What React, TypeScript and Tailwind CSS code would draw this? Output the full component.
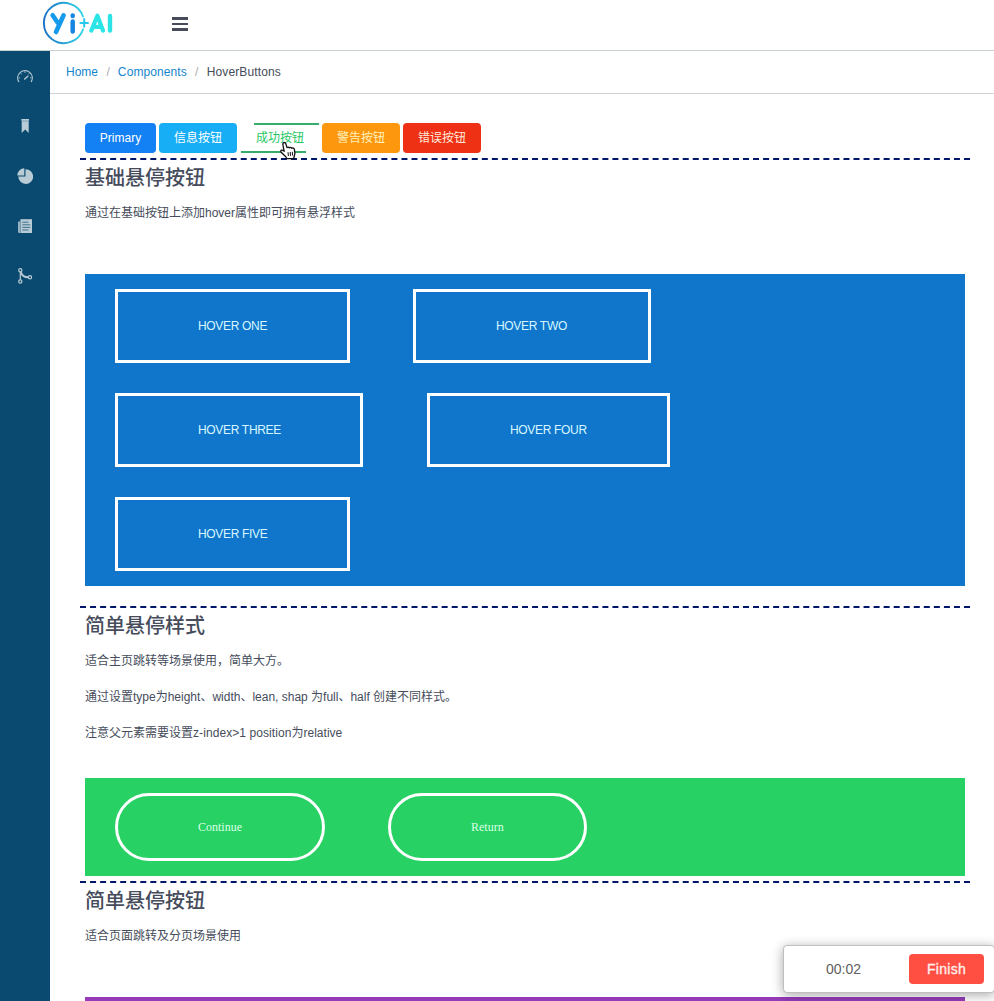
import type { ReactNode } from "react";

function Logo() {
  return (
    <svg width="74" height="48" viewBox="0 0 74 48" fill="none" strokeLinecap="round" strokeLinejoin="round">
      <defs>
        <linearGradient id="logo" gradientUnits="userSpaceOnUse" x1="2" y1="0" x2="44" y2="0">
          <stop offset="0" stopColor="#1b72c4" />
          <stop offset="1" stopColor="#2fdcea" />
        </linearGradient>
      </defs>
      <path d="M41 16.5A20.1 20.1 0 1 0 41 29.5" stroke="url(#logo)" strokeWidth="1.9" />
      <path d="M10.6 15.3L15.9 23M21.6 15.3L14 32" stroke="#169aec" strokeWidth="4.6" />
      <path d="M30.7 21.5V31.6M30.7 15.6V15.9" stroke="#1785e2" strokeWidth="4.5" />
      <path d="M38.4 22.9H46M42.2 19.1V26.8" stroke="#27c8ee" strokeWidth="2" />
      <path d="M49.3 30.6L55.4 15.8L61 30.6M53 26.8H58.5" stroke="#2ae4e6" strokeWidth="4.2" />
      <path d="M68 16V30.6" stroke="#2ae4e6" strokeWidth="4.4" />
    </svg>
  );
}

function Gauge() {
  return (
    <svg className="mt-[2px]" width="16" height="16" viewBox="0 0 16 16" fill="none" stroke="currentColor" strokeLinecap="round">
      <path d="M1.7 12.6A7.3 7.3 0 1 1 14.3 12.6" strokeWidth="1.1" />
      <path d="M8 2.2V3.6M3.6 4.2L4.4 5M1.6 8.8H2.6M14.4 8.8H13.4M12.4 4.2L11.6 5" strokeWidth=".8" />
      <path d="M7.7 10L10.8 7.2" strokeWidth="1.4" />
    </svg>
  );
}

function Bookmark() {
  return (
    <svg width="16" height="16" viewBox="0 0 16 16" fill="currentColor">
      <path d="M4.3 1H12V2.7H4.3zM4.7 3.3H11.7V15L8.2 11.6L4.7 15z" />
      <path d="M4.7 2.5H11.7V3.5H4.7z" opacity=".6" />
    </svg>
  );
}

function Pie() {
  return (
    <svg width="16" height="16" viewBox="0 0 16 16" fill="currentColor">
      <path d="M8.5 1.2A7.4 7.4 0 1 1 1.3 8.6H8.5z" />
      <path d="M7.3.3V7.4H.3A7.2 7.2 0 0 1 7.3.3z" />
    </svg>
  );
}

function Paper() {
  return (
    <svg width="16" height="16" viewBox="0 0 16 16" fill="currentColor">
      <path d="M3.4 1.2H15V15H3.4z" />
      <path d="M1.2 3.6H2.8V15H2.4A1.2 1.2 0 0 1 1.2 13.8z" />
      <path d="M5.3 4.2H11.5M5.3 6.8H13.3M5.3 9.4H13.3M5.3 12H11.5" stroke="#0a4a70" strokeWidth=".7" />
    </svg>
  );
}

function Git() {
  return (
    <svg width="16" height="16" viewBox="0 0 16 16" fill="none" stroke="currentColor" strokeWidth="1.2">
      <circle cx="3.3" cy="2.3" r="1.6" />
      <circle cx="3.3" cy="13.5" r="1.6" />
      <circle cx="13" cy="9.3" r="1.6" />
      <path d="M3.3 4V11.9" />
      <path d="M3.8 4C4.8 7.3 7 9.3 11.3 9.3" strokeWidth="2" />
    </svg>
  );
}

function Hand() {
  return (
    <svg className="absolute top-[18px] left-[38px]" width="18" height="19" viewBox="0 0 18 19">
      <path
        d="M3.9 2.6C4.3 1.1 6.2 1.1 6.8 2.6L8 6.6C8.6 5.9 9.9 5.9 10.3 6.9C11 6 12.3 6.2 12.7 7.3C13.9 6.6 15.2 7.2 15.4 8.5L15.9 11.8C16 13.8 15 14.6 14.8 17.6H8C7.2 15.2 3.3 12.9 2 10.9C1.1 9.3 2.9 8.2 5.2 10.3L4 4.3C3.8 3.6 3.8 3.1 3.9 2.6Z"
        fill="#fff"
        stroke="#111"
        strokeWidth="1.3"
        strokeLinejoin="round"
      />
      <path d="M9 11.2L9.4 15M11.2 11L11.5 14.8M13.3 10.8L13.5 14.5" stroke="#111" strokeWidth="1" />
    </svg>
  );
}

function Rule() {
  return <div className="-mx-[5px] border-t-2 border-dashed border-[#001769]" />;
}

function Title({ children }: { children: ReactNode }) {
  return <h2 className="pt-[2px] text-[20px] leading-[32px] font-medium">{children}</h2>;
}

function Box({ className, children }: { className: string; children: ReactNode }) {
  return (
    <button className={`flex h-[74px] items-center border-[3px] border-white pl-[80px] text-[12px] leading-none tracking-[-0.32px] text-[#d6f6ff] ${className}`}>
      {children}
    </button>
  );
}

function Pill({ className, children }: { className: string; children: ReactNode }) {
  return (
    <button className={`flex h-[68px] items-center rounded-full border-[3px] border-white pl-[80px] font-['Liberation_Serif',serif] text-[12px] leading-none text-[#dcffe8] ${className}`}>
      {children}
    </button>
  );
}

export default function App() {
  return (
    <div className="relative flex h-[1001px] w-[994px] flex-col overflow-hidden bg-white font-['Liberation_Sans','Noto_Sans_CJK_SC',sans-serif] text-[12px] text-[#464c5b]">
      <header className="flex h-[51px] shrink-0 border-b border-[#c7d1d2]">
        <div className="pl-[42px]">
          <Logo />
        </div>
        <div className="ml-[56px] flex flex-col gap-[3px] pt-[17px]">
          <span className="h-[2.5px] w-4 bg-[#484b5c]" />
          <span className="h-[2.5px] w-4 bg-[#484b5c]" />
          <span className="h-[2.5px] w-4 bg-[#484b5c]" />
        </div>
      </header>

      <div className="flex min-h-0 flex-1">
        <aside className="flex w-[50px] shrink-0 flex-col bg-[#0a4a70] text-[#b9ccd5]">
          <div className="flex h-[50px] items-center justify-center"><Gauge /></div>
          <div className="flex h-[50px] items-center justify-center"><Bookmark /></div>
          <div className="flex h-[50px] items-center justify-center"><Pie /></div>
          <div className="flex h-[50px] items-center justify-center"><Paper /></div>
          <div className="flex h-[50px] items-center justify-center"><Git /></div>
        </aside>

        <div className="flex min-w-0 flex-1 flex-col">
          <nav className="flex h-[43px] shrink-0 items-center border-b border-[#cfd5d7] pl-4">
            <span className="text-[#1585ca]">Home</span>
            <span className="mr-2 ml-[8.5px] text-[#a9adb5]">/</span>
            <span className="tracking-[0.1px] text-[#1585ca]">Components</span>
            <span className="mr-[8.5px] ml-2 text-[#a9adb5]">/</span>
            <span className="tracking-[0.12px]">HoverButtons</span>
          </nav>

          <main className="flex flex-col pt-[29px] pr-[29px] pl-[35px]">
            <div className="flex h-[35px] items-start text-white">
              <button className="h-[30px] w-[71px] rounded-[4px] bg-[#1380f3]">Primary</button>
              <button className="ml-[3px] h-[30px] w-[78px] rounded-[4px] bg-[#18aef6]">信息按钮</button>
              <div className="relative ml-[4px] flex h-[30px] w-[78px] flex-col">
                <span className="h-[2px] w-[65px] self-end bg-[#36ad6c]" />
                <span className="flex flex-1 items-center justify-center text-[#27c765]">成功按钮</span>
                <span className="h-[2px] w-[65px] bg-[#36ad6c]" />
                <Hand />
              </div>
              <button className="ml-[3px] h-[30px] w-[78px] rounded-[4px] bg-[#fd970d] text-[#fff2bf]">警告按钮</button>
              <button className="ml-[3px] h-[30px] w-[78px] rounded-[4px] bg-[#ee3014] text-[#ffe9d9]">错误按钮</button>
            </div>

            <section className="h-[448px]">
              <Rule />
              <Title>基础悬停按钮</Title>
              <p className="mt-[10px] leading-[18px]">通过在基础按钮上添加hover属性即可拥有悬浮样式</p>
              <div className="mt-[52px] flex h-[312px] flex-col gap-[30px] bg-[#0f76cb] pt-[15px] pl-[30px]">
                <div className="flex">
                  <Box className="w-[235px]">HOVER ONE</Box>
                  <Box className="ml-[63px] w-[238px]">HOVER TWO</Box>
                </div>
                <div className="flex">
                  <Box className="w-[248px]">HOVER THREE</Box>
                  <Box className="ml-[64px] w-[243px]">HOVER FOUR</Box>
                </div>
                <Box className="w-[235px]">HOVER FIVE</Box>
              </div>
            </section>

            <section className="h-[275px]">
              <Rule />
              <Title>简单悬停样式</Title>
              <div className="mt-[10px] flex flex-col gap-[18px] leading-[18px]">
                <p>适合主页跳转等场景使用，简单大方。</p>
                <p>通过设置type为height、width、lean, shap 为full、half 创建不同样式。</p>
                <p>注意父元素需要设置<span className="tracking-[0.08px]">z-index&gt;1 position</span>为relative</p>
              </div>
              <div className="mt-[36px] flex h-[98px] bg-[#27d163] pt-[15px] pl-[30px]">
                <Pill className="w-[210px]">Continue</Pill>
                <Pill className="ml-[63px] w-[199px]">Return</Pill>
              </div>
            </section>

            <section>
              <Rule />
              <Title>简单悬停按钮</Title>
              <p className="mt-[10px] leading-[18px]">适合页面跳转及分页场景使用</p>
              <div className="mt-[52px] h-[98px] bg-[#953bb9]" />
            </section>
          </main>
        </div>
      </div>

      <div className="absolute top-[945px] left-[783px] flex h-[48px] w-[212px] items-center rounded-[4px] border border-[#bfbfbf] bg-white font-['Liberation_Sans',sans-serif] text-[14px] shadow-[0_2px_12px_rgba(0,0,0,0.35)]">
        <span className="ml-[42px] w-[83px] text-[#606060]">00:02</span>
        <button className="h-[30px] w-[75px] rounded-[4px] bg-[#ff4f43] tracking-[0.3px] text-[#fff0ee] [-webkit-text-stroke:0.3px_#fff0ee]">Finish</button>
      </div>
    </div>
  );
}
